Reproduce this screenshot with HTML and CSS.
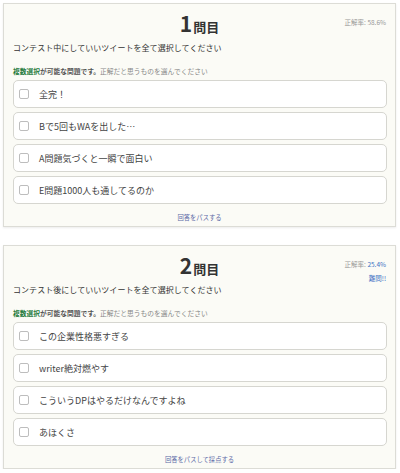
FILE: index.html
```html
<!DOCTYPE html>
<html lang="ja">
<head>
<meta charset="utf-8">
<link rel="stylesheet" href="styles.css">
</head>
<body>
<div class="page">
  <section class="card">
    <div class="head">
      <div></div>
      <h2 class="title"><span class="num">1</span><span class="suffix">問目</span></h2>
      <div class="rate"><span class="rate-label">正解率: </span><span>58.6%</span></div>
    </div>
    <p class="question">コンテスト中にしていいツイートを全て選択してください</p>
    <p class="hint"><span class="multi">複数選択</span><span class="hint-b">が可能な問題です。</span>正解だと思うものを選んでください</p>
    <ul class="options">
      <li class="option"><span class="box"></span><span class="label">全完！</span></li>
      <li class="option"><span class="box"></span><span class="label">Bで5回もWAを出した…</span></li>
      <li class="option"><span class="box"></span><span class="label">A問題気づくと一瞬で面白い</span></li>
      <li class="option"><span class="box"></span><span class="label">E問題1000人も通してるのか</span></li>
    </ul>
    <div class="pass">回答をパスする</div>
  </section>
  <section class="card">
    <div class="head">
      <div></div>
      <h2 class="title"><span class="num">2</span><span class="suffix">問目</span></h2>
      <div class="rate"><span class="rate-label">正解率: </span><span class="blue">25.4%</span><div class="blue hard">難問!!</div></div>
    </div>
    <p class="question">コンテスト後にしていいツイートを全て選択してください</p>
    <p class="hint"><span class="multi">複数選択</span><span class="hint-b">が可能な問題です。</span>正解だと思うものを選んでください</p>
    <ul class="options">
      <li class="option"><span class="box"></span><span class="label">この企業性格悪すぎる</span></li>
      <li class="option"><span class="box"></span><span class="label">writer絶対燃やす</span></li>
      <li class="option"><span class="box"></span><span class="label">こういうDPはやるだけなんですよね</span></li>
      <li class="option"><span class="box"></span><span class="label">あほくさ</span></li>
    </ul>
    <div class="pass">回答をパスして採点する</div>
  </section>
</div>
</body>
</html>
```
FILE: styles.css
```css
* { box-sizing: border-box; }
html, body {
  margin: 0;
  padding: 0;
  background: #ffffff;
}
body {
  font-family: "Noto Sans CJK JP", "Noto Sans", sans-serif;
  color: #333333;
}
.page {
  display: flex;
  flex-direction: column;
  gap: 18px;
  padding: 3px 4px 0 3px;
}
.card {
  background: #fbfbf6;
  border: 1px solid #dcdcd6;
  box-shadow: 0 1px 2px rgba(0,0,0,0.08);
  height: 224px;
  padding: 6px 8px 0 8px;
  display: flex;
  flex-direction: column;
}
.head {
  display: grid;
  grid-template-columns: 1fr auto 1fr;
  height: 26px;
}
.title {
  margin: 0;
  font-weight: 700;
  line-height: 26px;
  color: #333;
  display: flex;
  align-items: baseline;
  gap: 1px;
}
.num { font-size: 21px; }
.suffix { font-size: 13px; }
.rate {
  justify-self: end;
  text-align: right;
  font-size: 6.5px;
  line-height: 8px;
  color: #999999;
  padding-top: 8px;
  padding-right: 1px;
}
.blue { color: #3f72c4; }
.hard { margin-top: 6px; }
.question {
  margin: 7px 0 0 0;
  padding-left: 1px;
  font-size: 8px;
  letter-spacing: 0.05px;
  line-height: 10px;
  color: #333;
}
.hint {
  margin: 14px 0 0 0;
  padding-left: 1px;
  font-size: 6.75px;
  line-height: 8px;
  color: #888;
}
.multi { color: #1f7a3c; font-weight: 700; }
.hint-b { color: #555; font-weight: 700; }
.options {
  list-style: none;
  margin: 5px 0 0 0;
  padding: 0 0 0 1px;
  display: flex;
  flex-direction: column;
  gap: 4px;
}
.option {
  height: 28px;
  background: #ffffff;
  border: 1px solid #d6d6d0;
  border-radius: 5px;
  display: flex;
  align-items: center;
  padding-left: 5px;
  gap: 10px;
}
.box {
  width: 10px;
  height: 10px;
  border: 1px solid #bdbdbd;
  border-radius: 2px;
  background: #fff;
  flex: none;
}
.label {
  font-size: 9px;
  color: #444;
}
.pass {
  margin-top: 10px;
  text-align: center;
  font-size: 6.3px;
  line-height: 8px;
  color: #5b6aa6;
}
```
